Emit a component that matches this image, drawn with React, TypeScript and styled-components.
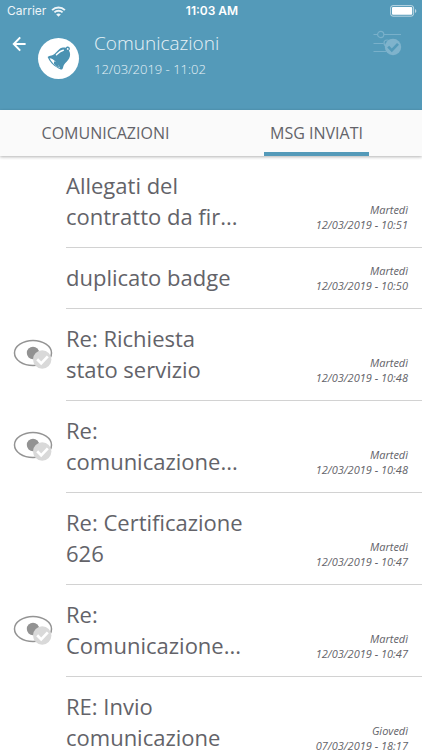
import React from "react";
import styled, { createGlobalStyle } from "styled-components";

const BLUE = "#549ab9";
const INK = "#636369";

const GlobalStyle = createGlobalStyle`
  *, *::before, *::after { box-sizing: border-box; }
  html, body { margin: 0; }
  body {
    background: #fff;
    color: ${INK};
    font-family: "Open Sans", "Noto Sans", sans-serif;
  }
  #root { height: 100vh; overflow: hidden; }
  button { font: inherit; color: inherit; background: none; border: 0; padding: 0; cursor: pointer; }
`;

const Screen = styled.main`
  display: flex;
  flex-direction: column;
  min-height: 100vh;
`;

const Header = styled.header`
  background: ${BLUE};
  color: #fff;
  padding-bottom: 22px;
`;

const StatusBar = styled.div`
  display: grid;
  grid-template-columns: 1fr auto 1fr;
  align-items: center;
  height: 22px;
  padding: 0 5px 0 7px;
  font-family: Inter, Roboto, sans-serif;
  font-size: 12px;
  line-height: 16px;
`;

const Carrier = styled.span`
  display: flex;
  align-items: center;
  gap: 5px;
  opacity: 0.9;
`;

const Clock = styled.span`
  font-weight: 600;
`;

const Battery = styled.svg`
  justify-self: end;
`;

const TitleBar = styled.div`
  display: flex;
  align-items: flex-start;
  padding: 8px 20px 0 12px;
  min-height: 66px;
`;

const BackButton = styled.button`
  display: flex;
  width: 14px;
  margin: 6px 12px 0 0;
`;

const Avatar = styled.span`
  display: flex;
  align-items: center;
  justify-content: center;
  width: 41px;
  height: 41px;
  margin: 8px 15px 0 0;
  border-radius: 50%;
  background: #fff;
`;

const Heading = styled.div`
  flex: 1;
`;

const PageTitle = styled.h1`
  margin: 0;
  font-size: 19px;
  line-height: 26px;
  font-weight: 300;
  color: #e7f2f7;
`;

const Updated = styled.time`
  display: block;
  font-size: 13px;
  line-height: 26px;
  font-weight: 300;
  color: #e7f2f7;
`;

const FilterButton = styled.button`
  display: flex;
`;

const Tabs = styled.nav`
  position: relative;
  display: flex;
  height: 46px;
  background: #fafafa;
  box-shadow: 0 1px 3px rgba(0, 0, 0, 0.3);
`;

const TabCell = styled.div`
  flex: 1;
  display: flex;
  justify-content: center;
`;

const Tab = styled.button<{ $active?: boolean }>`
  && { padding: 4px 6px 0; }
  font-size: 16px;
  line-height: 24px;
  && { border-bottom: 4px solid ${(p) => (p.$active ? BLUE : "transparent")}; }
`;

const List = styled.ul`
  margin: 0;
  padding: 0;
  list-style: none;
`;

const Row = styled.li`
  display: grid;
  grid-template-columns: 66px minmax(0, 1fr);
`;

const Status = styled.span`
  display: flex;
  align-items: center;
  padding-left: 13px;
`;

const Message = styled.div`
  display: flex;
  align-items: flex-end;
  gap: 64px;
  padding: 14px 14px 15px 0;
  border-bottom: 1px solid #d2d2d2;
`;

const Subject = styled.h2`
  flex: 1;
  align-self: flex-start;
  min-width: 0;
  margin: 0;
  font-size: 22px;
  line-height: 31px;
  font-weight: 400;
`;

const Meta = styled.time`
  display: flex;
  flex-direction: column;
  font-size: 11px;
  line-height: 15px;
  font-style: italic;
  text-align: right;
  white-space: nowrap;
`;

const WifiIcon = () => (
  <svg width="15" height="11" viewBox="0 0 15 11" fill="none" aria-hidden="true">
    <path d="M1.1 4.1C4.7.6 10.3.6 13.9 4.1" stroke="#fff" strokeWidth="2" />
    <path d="M3.4 6.4c2.3-2.2 5.9-2.2 8.2 0" stroke="#fff" strokeWidth="1.9" />
    <path d="M7.5 10.7 5.2 8.4c1.3-1.2 3.3-1.2 4.6 0Z" fill="#fff" />
  </svg>
);

const BatteryIcon = () => (
  <Battery width="27" height="12" viewBox="0 0 27 12" aria-label="Batteria carica" role="img">
    <rect x="0.6" y="0.6" width="23" height="10.6" rx="2.4" fill="none" stroke="#fff" strokeOpacity="0.6" />
    <rect x="2" y="2" width="20.2" height="7.8" rx="1" fill="#fff" />
    <path d="M25 4v4c1.8-.6 1.8-3.4 0-4Z" fill="#fff" fillOpacity="0.6" />
  </Battery>
);

const BackIcon = () => (
  <svg width="14" height="16" viewBox="0 0 14 16" fill="none" stroke="#fff" strokeWidth="2" aria-hidden="true">
    <path d="M13.6 8H2M8.2 1.4 1.8 8l6.4 6.6" />
  </svg>
);

const BellIcon = () => (
  <svg width="26" height="26" viewBox="0 0 26 26" aria-hidden="true">
    <path
      d="M1.6 10.9c1.4-1.2 3.4-.9 5.3-1.8 2.6-1.2 4.4-4.5 7.2-6.5 2-1.4 4.2-1.2 5.7-.9.6-1.3 2.6-1.7 3.6-.5.9 1.1.6 2.6-.5 3.3 1.5 2.3 1.6 5 .3 7.7-1.2 2.5-3.9 4.4-5.3 6.7-.8 1.4-.6 3.2-1.9 4.6-1.7-.1-3.1-.7-4.6-1.8C6.9 19.5 3.5 15.5 1.6 10.9Z"
      fill="#4a92b2"
    />
    <path d="M3.6 12.3c1.9.1 4.3 1.5 6.3 3.7 1.9 2.1 3.4 4.5 4.1 6.3-3.9-1.5-8.1-5.5-10.4-10Z" fill="#fff" />
    <path d="M8 15.6c1.6-.4 3.3.4 4 2 .5 1.2.5 2.8 1.4 4.2-1.9-.7-3.7-2-5.4-3.8Z" fill="#4a92b2" />
    <path d="M10.5 8.7c2-2 3.8-4 6.8-4.5" fill="none" stroke="#fff" strokeWidth="1.5" strokeLinecap="round" />
    <circle cx="21.7" cy="2.9" r="0.9" fill="#fff" />
  </svg>
);

const FilterIcon = () => (
  <svg width="29" height="26" viewBox="0 0 29 26" fill="none" aria-hidden="true">
    <g stroke="#79b0ca" strokeWidth="1.2">
      <path d="M.5 4.5h4M11 4.5h17M.5 13.5h10M.5 21.5h13" />
      <circle cx="7.7" cy="4.5" r="3.1" />
      <circle cx="14" cy="13" r="3" />
    </g>
    <circle cx="20" cy="17" r="8.2" fill="#7fb3cc" />
    <path d="m15.2 16.6 3.6 3.8 6.2-6.6" stroke={BLUE} strokeWidth="2.7" />
  </svg>
);

const SeenIcon = () => (
  <svg width="40" height="32" viewBox="0 0 40 32" fill="none" role="img" aria-label="Letto">
    <ellipse cx="20" cy="14" rx="18.5" ry="12.5" stroke="#949494" strokeWidth="1.5" />
    <circle cx="20" cy="14" r="6.2" fill="#929292" />
    <circle cx="29.2" cy="20.5" r="9.2" fill="#d9d9d9" />
    <path d="m24.2 20.2 4 4.2 6.6-7" stroke="#fff" strokeWidth="2.7" />
  </svg>
);

const messages = [
  { subject: "Allegati del contratto da fir...", day: "Martedì", date: "12/03/2019 - 10:51" },
  { subject: "duplicato badge", day: "Martedì", date: "12/03/2019 - 10:50" },
  { subject: "Re: Richiesta stato servizio", day: "Martedì", date: "12/03/2019 - 10:48", seen: true },
  { subject: "Re: comunicazione...", day: "Martedì", date: "12/03/2019 - 10:48", seen: true },
  { subject: "Re: Certificazione 626", day: "Martedì", date: "12/03/2019 - 10:47" },
  { subject: "Re: Comunicazione...", day: "Martedì", date: "12/03/2019 - 10:47", seen: true },
  { subject: "RE: Invio comunicazione", day: "Giovedì", date: "07/03/2019 - 18:17" },
];

export default function App() {
  return (
    <>
      <GlobalStyle />
      <Screen>
        <Header>
          <StatusBar>
            <Carrier>
              Carrier
              <WifiIcon />
            </Carrier>
            <Clock>11:03 AM</Clock>
            <BatteryIcon />
          </StatusBar>
          <TitleBar>
            <BackButton aria-label="Indietro">
              <BackIcon />
            </BackButton>
            <Avatar>
              <BellIcon />
            </Avatar>
            <Heading>
              <PageTitle>Comunicazioni</PageTitle>
              <Updated>12/03/2019 - 11:02</Updated>
            </Heading>
            <FilterButton aria-label="Filtri">
              <FilterIcon />
            </FilterButton>
          </TitleBar>
        </Header>
        <Tabs>
          <TabCell>
            <Tab>COMUNICAZIONI</Tab>
          </TabCell>
          <TabCell>
            <Tab $active aria-current="page">MSG INVIATI</Tab>
          </TabCell>
        </Tabs>
        <List>
          {messages.map((m, i) => (
            <Row key={i}>
              <Status>{m.seen && <SeenIcon />}</Status>
              <Message>
                <Subject>{m.subject}</Subject>
                <Meta>
                  <span>{m.day}</span>
                  <span>{m.date}</span>
                </Meta>
              </Message>
            </Row>
          ))}
        </List>
      </Screen>
    </>
  );
}
